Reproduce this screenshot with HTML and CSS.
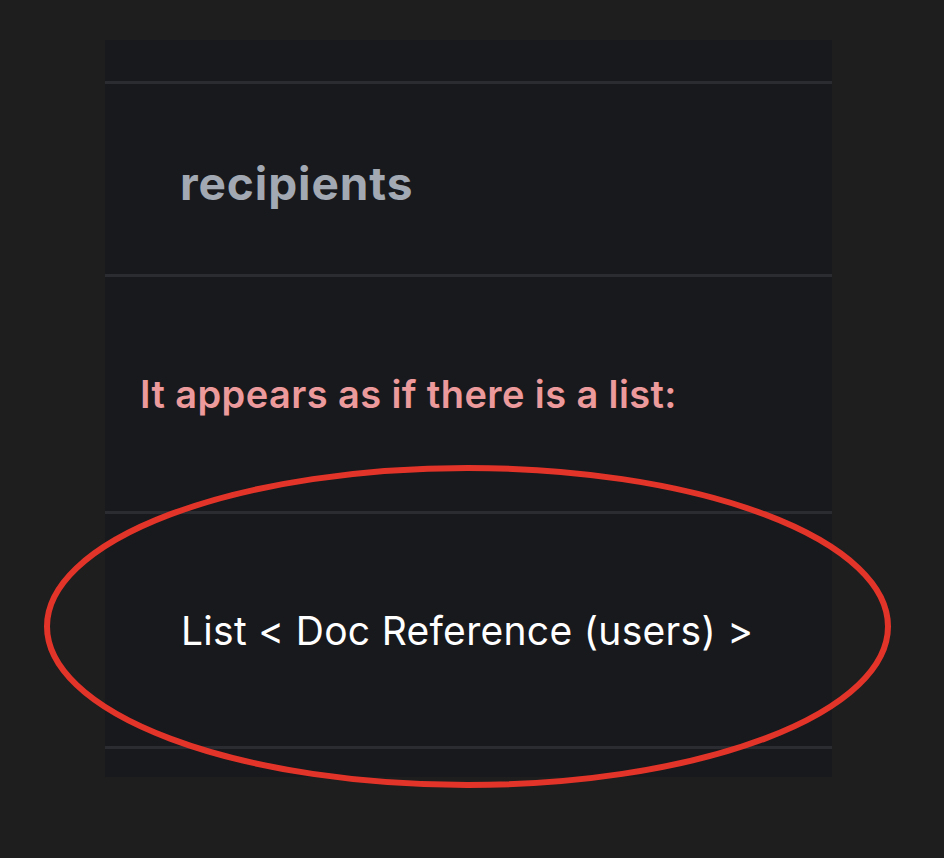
FILE: index.html
```html
<!DOCTYPE html>
<html lang="en">
<head>
    <meta charset="UTF-8">
    <meta name="viewport" content="width=device-width, initial-scale=1.0">
    <title>recipients</title>
    <link rel="stylesheet" href="styles.css">
</head>
<body>

<div class="panel">
    <div class="row row-top"></div>
    <div class="row row-name">
        <span class="field-name">recipients</span>
    </div>
    <div class="row row-note">
        <span class="note">It appears as if there is a list:</span>
    </div>
    <div class="row row-type">
        <span class="field-type">List &lt; Doc Reference (users) &gt;</span>
    </div>
    <div class="row row-end"></div>
</div>

<!-- red marker round the type row -->
<svg class="marker" width="944" height="858" viewBox="0 0 944 858">
    <ellipse cx="467.5" cy="626.5" rx="420.5" ry="158.5" fill="none" stroke="#e3342a" stroke-width="6"/>
</svg>

</body>
</html>
```

FILE: styles.css
```css
body {
    margin: 0;
    padding: 40px 0 0 0;
    background-color: #1e1e1e;
    font-family: Inter, "Open Sans", sans-serif;
    height: 818px;
    overflow: hidden;
    position: relative;
}
.panel {
    width: 727px;
    margin-left: 105px;
    background-color: #18191c;
}
.row {
    display: flex;
    align-items: center;
    border-bottom: 3px solid #2a2c31;
}
.row-top {
    height: 41px;
}
.row-name {
    height: 190px;
    padding-left: 75px;
}
.row-note {
    height: 234px;
    padding-left: 35px;
}
.row-type {
    height: 232px;
    padding-left: 76px;
}
.row-end {
    height: 28px;
    border-bottom: none;
}
.field-name {
    font-size: 46px;
    font-weight: 700;
    letter-spacing: 0.9px;
    color: #a2a9b3;
    margin-top: 8px;
}
.note {
    font-size: 38px;
    font-weight: 600;
    letter-spacing: 0.4px;
    color: #ec9a9b;
}
.field-type {
    font-size: 39px;
    font-weight: 400;
    letter-spacing: 0.3px;
    color: #ffffff;
}
.marker {
    position: absolute;
    left: 0;
    top: 0;
    pointer-events: none;
}
```
